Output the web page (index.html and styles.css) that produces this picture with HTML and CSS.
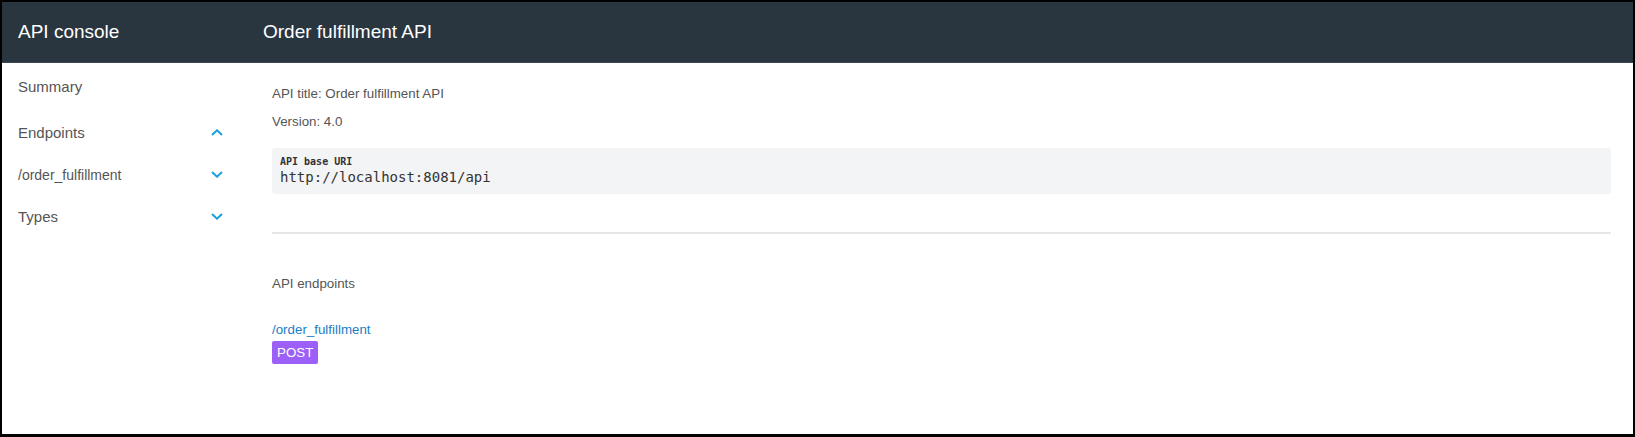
FILE: index.html
```html
<!DOCTYPE html>
<html lang="en">
<head>
<meta charset="utf-8">
<title>API console</title>
<link rel="stylesheet" href="styles.css">
</head>
<body>
<div class="frame">
  <div class="app">
    <div class="brand">API console</div>
    <div class="page-title">Order fulfillment API</div>
    <nav class="sidebar">
      <div class="nav-item nav-summary">Summary</div>
      <div class="nav-item nav-endpoints">
        <span>Endpoints</span>
        <svg class="chev" width="12" height="7" viewBox="0 0 12 7"><path d="M1 6 L6 1.3 L11 6" fill="none" stroke="#1a9fdf" stroke-width="2"/></svg>
      </div>
      <div class="nav-item nav-sub">
        <span>/order_fulfillment</span>
        <svg class="chev" width="12" height="7" viewBox="0 0 12 7"><path d="M1 1 L6 5.7 L11 1" fill="none" stroke="#1a9fdf" stroke-width="2"/></svg>
      </div>
      <div class="nav-item">
        <span>Types</span>
        <svg class="chev" width="12" height="7" viewBox="0 0 12 7"><path d="M1 1 L6 5.7 L11 1" fill="none" stroke="#1a9fdf" stroke-width="2"/></svg>
      </div>
    </nav>
    <main class="content">
      <p class="info">API title: Order fulfillment API</p>
      <p class="info info-last">Version: 4.0</p>
      <div class="code-box">
        <div class="code-label">API base URI</div>
        <div class="code-value">http://localhost:8081/api</div>
      </div>
      <hr class="divider">
      <p class="section-title">API endpoints</p>
      <a class="endpoint-link" href="#">/order_fulfillment</a>
      <div class="badge-row"><span class="badge-post">POST</span></div>
    </main>
  </div>
</div>
</body>
</html>
```

FILE: styles.css
```css
html, body {
  margin: 0;
  padding: 0;
  background: #ffffff;
}

.frame {
  width: 1635px;
  height: 437px;
  box-sizing: border-box;
  border-style: solid;
  border-color: #000000;
  border-width: 2px 2px 3px 2px;
  overflow: hidden;
  font-family: "Liberation Sans", Arial, sans-serif;
}

.app {
  display: grid;
  grid-template-columns: 245px 1fr;
  grid-template-rows: 61px 1fr;
  height: 100%;
}

.brand,
.page-title {
  background: #29353f;
  color: #ffffff;
  font-size: 19px;
  display: flex;
  align-items: center;
  border-bottom: 1px solid #3a4651;
  box-sizing: border-box;
}

.brand {
  padding-left: 16px;
}

.page-title {
  padding-left: 16px;
}

.sidebar {
  padding: 2px 24px 0 16px;
  color: #555555;
}

.nav-item {
  display: flex;
  align-items: center;
  justify-content: space-between;
  height: 42px;
  font-size: 15px;
}

.nav-summary {
  margin-bottom: 4px;
}

.nav-endpoints {
  height: 43px;
}

.nav-sub {
  font-size: 14px;
  height: 41px;
}

.chev {
  display: block;
  flex: none;
}

.content {
  padding: 21px 22px 0 25px;
  color: #555555;
  font-size: 13.33px;
}

.info {
  margin: 0 0 8px;
  line-height: 20px;
}

.info-last {
  margin-bottom: 16px;
}

.code-box {
  background: #f3f4f5;
  border-radius: 3px;
  padding: 8px 8px 8px 8px;
}

.code-label {
  font-family: "DejaVu Sans Mono", "Liberation Mono", monospace;
  font-weight: bold;
  font-size: 10px;
  line-height: 12px;
  color: #333333;
}

.code-value {
  font-family: "DejaVu Sans Mono", "Liberation Mono", monospace;
  font-size: 14px;
  line-height: 18px;
  color: #333333;
}

.divider {
  border: 0;
  height: 2px;
  background: #e6e6e6;
  margin: 38px 0 0;
}

.section-title {
  margin: 40px 0 0;
  line-height: 20px;
}

.endpoint-link {
  display: block;
  margin-top: 26px;
  line-height: 20px;
  color: #1d7dc5;
  text-decoration: none;
}

.badge-row {
  margin-top: 1px;
}

.badge-post {
  display: inline-block;
  background: #9c5ff7;
  color: #ffffff;
  padding: 0 5px;
  line-height: 23px;
  border-radius: 2px;
}
```
